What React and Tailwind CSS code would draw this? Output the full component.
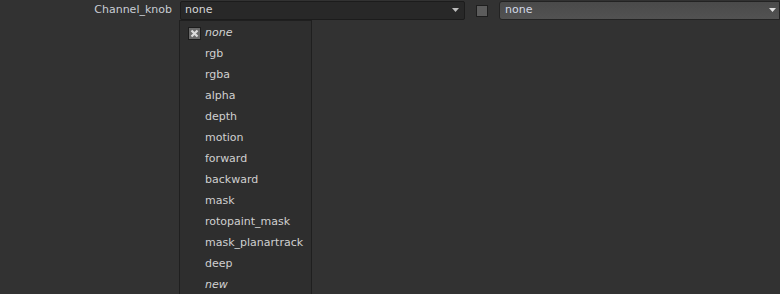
import React from "react";

const items = [
  { t: "none", italic: true, checked: true },
  { t: "rgb" },
  { t: "rgba" },
  { t: "alpha" },
  { t: "depth" },
  { t: "motion" },
  { t: "forward" },
  { t: "backward" },
  { t: "mask" },
  { t: "rotopaint_mask" },
  { t: "mask_planartrack" },
  { t: "deep" },
  { t: "new", italic: true },
];

function Arrow({ color = "#bdbdbd" }) {
  return (
    <svg width="7" height="5" viewBox="0 0 7 5">
      <path d="M0 0 H7 L3.5 4 Z" fill={color} />
    </svg>
  );
}

export default function App() {
  return (
    <div
      className="relative w-[780px] h-[294px] overflow-hidden bg-[#323232] text-[11px] text-[#cfcfcf]"
      style={{ fontFamily: '"DejaVu Sans", Verdana, sans-serif' }}
    >
      <div className="flex items-center h-[20px] pt-[1px]">
        <div className="w-[173px] text-right pr-[1px] text-[#c9cdd4]">Channel_knob</div>
        <div className="ml-[7px] w-[285px] h-[19px] flex items-center justify-between bg-[#282828] border border-[#1c1c1c] rounded-[2px] pl-[4px] pr-[5px]">
          <span className="text-[#d6d6d6]">none</span>
          <Arrow />
        </div>
        <div className="ml-[11px] w-[12px] h-[12px] bg-[#5c5c5c] border border-[#1e1e1e]" />
        <div className="ml-[11px] flex-1 h-[19px] flex items-center justify-between bg-gradient-to-b from-[#4a4a4a] to-[#525252] border border-[#232323] rounded-l-[3px] pl-[5px] pr-[3px]">
          <span className="text-[#d3d9e6]">none</span>
          <Arrow color="#e0e0e0" />
        </div>
      </div>

      <div className="absolute left-[179px] top-[20px] w-[133px] h-[290px] bg-[#2e2e2e] border border-[#1f1f1f] pt-[2px]">
        {items.map((it) => (
          <div key={it.t} className="flex items-center h-[21px]">
            <div className="w-[25px] flex justify-end pr-[4px]">
              {it.checked && (
                <div className="w-[13px] h-[13px] bg-[#6a6a6a] border border-[#1c1c1c] flex items-center justify-center">
                  <svg width="9" height="9" viewBox="0 0 9 9">
                    <path d="M1.5 1.5 L7.5 7.5 M7.5 1.5 L1.5 7.5" stroke="#dcdcdc" strokeWidth="2.2" />
                  </svg>
                </div>
              )}
            </div>
            <span className={it.italic ? "italic text-[#d2d2d2]" : "text-[#d0d0d0]"}>{it.t}</span>
          </div>
        ))}
      </div>
    </div>
  );
}
